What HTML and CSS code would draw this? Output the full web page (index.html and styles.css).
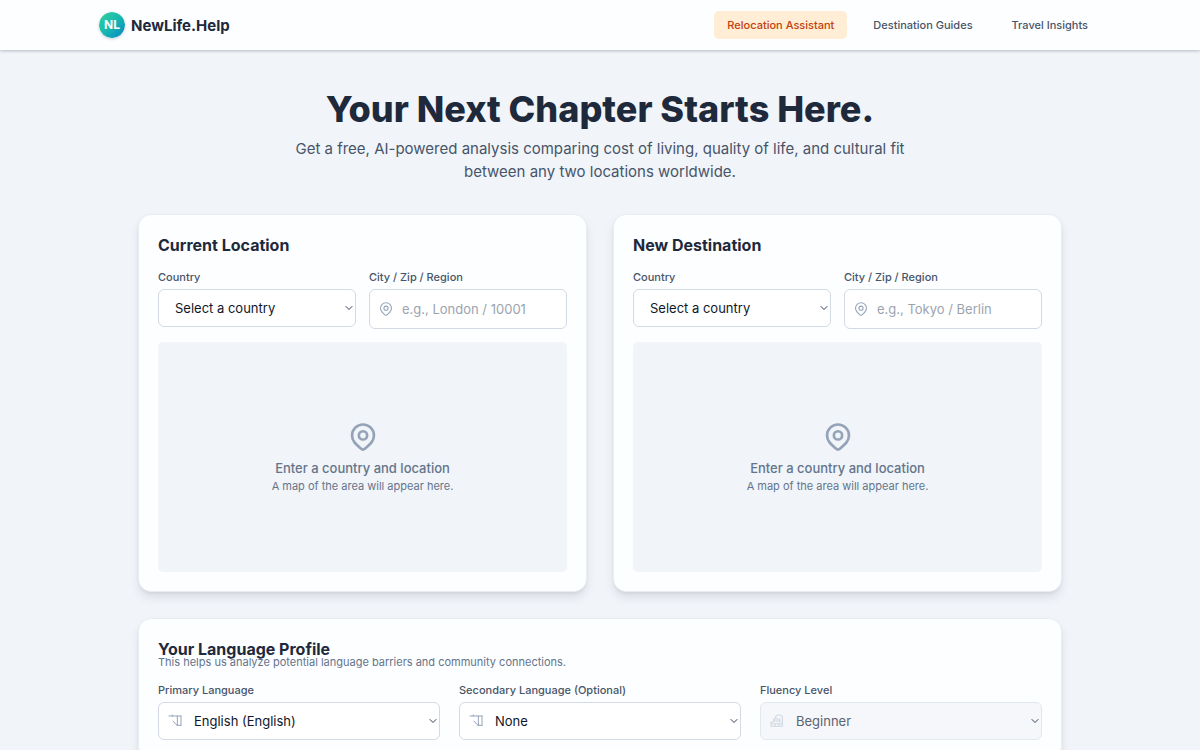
FILE: index.html
```html
<!DOCTYPE html>
<html lang="en">
<head>
  <meta charset="UTF-8">
  <meta name="viewport" content="width=device-width, initial-scale=1.0">
  <title>NewLife.Help</title>
  <link rel="stylesheet" href="styles.css">
</head>
<body>
  <svg class="sprite" aria-hidden="true">
    <symbol id="pin" viewBox="0 0 24 24">
      <circle cx="12" cy="10.8" r="3.1"/>
      <path d="M20.2 10.8c0 4.6-3.4 7-6.6 9.9-1 .9-2.2.9-3.2 0-3.2-2.9-6.6-5.3-6.6-9.9a8.2 8.2 0 1 1 16.4 0Z"/>
    </symbol>
    <symbol id="lang" viewBox="0 0 24 24">
      <path d="M3 4.5h18M8 3v1.5M15.5 4.5v14M21 4.5v14M15.5 18.5H21M9 12c2 0 3 6 6.5 6.5"/>
    </symbol>
    <symbol id="level" viewBox="0 0 24 24">
      <path d="M3 20v-6l4-1V9h3V6c0-2 2-3 5-3s5 1 5 3v14H3ZM3 16h17M11 9h5v4M8 12h9M9 20v-4M15 20v-4"/>
    </symbol>
    <symbol id="chevron" viewBox="0 0 8 8">
      <path d="M1 2.5l3 3 3-3"/>
    </symbol>
  </svg>

  <header class="header">
    <div class="header-inner">
      <a href="#" class="brand">
        <svg class="logo" viewBox="0 0 26 26" aria-hidden="true">
          <defs>
            <linearGradient id="logoFill" x1="0" y1="0" x2="1" y2="1">
              <stop offset="0" stop-color="#34d399"/>
              <stop offset="0.5" stop-color="#16b8b0"/>
              <stop offset="1" stop-color="#0284c7"/>
            </linearGradient>
          </defs>
          <circle cx="13" cy="13" r="13" fill="url(#logoFill)"/>
          <text x="13" y="17" text-anchor="middle" class="logo-text">NL</text>
        </svg>
        <span>NewLife.Help</span>
      </a>
      <nav class="nav">
        <a href="#" class="nav-link active">Relocation Assistant</a>
        <a href="#" class="nav-link">Destination Guides</a>
        <a href="#" class="nav-link">Travel Insights</a>
      </nav>
    </div>
  </header>

  <main class="main">
    <section class="hero">
      <h1>Your Next Chapter Starts Here.</h1>
      <p>Get a free, AI-powered analysis comparing cost of living, quality of life, and cultural fit between any two locations worldwide.</p>
    </section>

    <form class="form">
      <div class="locations">
        <section class="card">
          <h2>Current Location</h2>
          <div class="fields two">
            <div class="field">
              <label for="currentCountry">Country</label>
              <div class="control-wrap">
                <select id="currentCountry" class="control plain">
                  <option>Select a country</option>
                </select>
                <svg class="chevron"><use href="#chevron"/></svg>
              </div>
            </div>
            <div class="field">
              <label for="currentCity">City / Zip / Region</label>
              <div class="control-wrap">
                <svg class="icon"><use href="#pin"/></svg>
                <input type="text" id="currentCity" class="control" placeholder="e.g., London / 10001">
              </div>
            </div>
          </div>
          <div class="map">
            <svg class="map-icon"><use href="#pin"/></svg>
            <p class="map-title">Enter a country and location</p>
            <p class="map-note">A map of the area will appear here.</p>
          </div>
        </section>

        <section class="card">
          <h2>New Destination</h2>
          <div class="fields two">
            <div class="field">
              <label for="newCountry">Country</label>
              <div class="control-wrap">
                <select id="newCountry" class="control plain">
                  <option>Select a country</option>
                </select>
                <svg class="chevron"><use href="#chevron"/></svg>
              </div>
            </div>
            <div class="field">
              <label for="newCity">City / Zip / Region</label>
              <div class="control-wrap">
                <svg class="icon"><use href="#pin"/></svg>
                <input type="text" id="newCity" class="control" placeholder="e.g., Tokyo / Berlin">
              </div>
            </div>
          </div>
          <div class="map">
            <svg class="map-icon"><use href="#pin"/></svg>
            <p class="map-title">Enter a country and location</p>
            <p class="map-note">A map of the area will appear here.</p>
          </div>
        </section>
      </div>

      <section class="card profile">
        <h2>Your Language Profile</h2>
        <p class="profile-note">This helps us analyze potential language barriers and community connections.</p>
        <div class="fields three">
          <div class="field">
            <label for="primaryLanguage">Primary Language</label>
            <div class="control-wrap">
              <svg class="icon thin"><use href="#lang"/></svg>
              <select id="primaryLanguage" class="control">
                <option>English (English)</option>
              </select>
              <svg class="chevron"><use href="#chevron"/></svg>
            </div>
          </div>
          <div class="field">
            <label for="secondaryLanguage">Secondary Language (Optional)</label>
            <div class="control-wrap">
              <svg class="icon thin"><use href="#lang"/></svg>
              <select id="secondaryLanguage" class="control">
                <option>None</option>
              </select>
              <svg class="chevron"><use href="#chevron"/></svg>
            </div>
          </div>
          <div class="field">
            <label for="fluency">Fluency Level</label>
            <div class="control-wrap">
              <svg class="icon faded"><use href="#level"/></svg>
              <select id="fluency" class="control" disabled>
                <option>Beginner</option>
              </select>
              <svg class="chevron"><use href="#chevron"/></svg>
            </div>
          </div>
        </div>
      </section>
    </form>
  </main>
</body>
</html>
```
FILE: styles.css
```css
* {
  box-sizing: border-box;
}

body {
  margin: 0;
  font-family: Inter, "Liberation Sans", sans-serif;
  background-color: #f1f4f9;
  color: #1e293b;
}

h1, h2, p {
  margin: 0;
}

.sprite {
  display: none;
}

svg {
  fill: none;
  stroke: currentColor;
  stroke-linecap: round;
  stroke-linejoin: round;
}

/* Header */
.header {
  background-color: #fdfeff;
  box-shadow: 0 1px 3px rgba(15, 23, 42, 0.25);
}

.header-inner {
  display: flex;
  justify-content: space-between;
  align-items: center;
  max-width: 1026px;
  height: 50px;
  margin: 0 auto;
  padding: 0 12px;
}

.brand {
  display: flex;
  align-items: center;
  gap: 6px;
  color: #1e293b;
  font-size: 15px;
  font-weight: 700;
  text-decoration: none;
}

.logo {
  width: 26px;
  height: 26px;
  stroke: none;
  border-radius: 50%;
  box-shadow: 0 1px 3px rgba(15, 23, 42, 0.2);
}

.logo-text {
  fill: white;
  font-size: 12px;
  font-weight: 700;
}

.nav {
  display: flex;
  gap: 13px;
}

.nav-link {
  padding: 6px 13px;
  border-radius: 5px;
  color: #475569;
  font-size: 11px;
  font-weight: 500;
  line-height: 16px;
  text-decoration: none;
}

.nav-link.active {
  background-color: #ffedd5;
  color: #c2410c;
}

/* Hero */
.main {
  max-width: 950px;
  margin: 0 auto;
  padding: 39px 13px;
}

.hero {
  max-width: 620px;
  margin: 0 auto 31px;
  text-align: center;
}

h1 {
  font-size: 36px;
  font-weight: 800;
  line-height: 40px;
}

.hero p {
  margin-top: 8px;
  color: #475569;
  font-size: 15px;
  line-height: 23px;
}

/* Cards */
.form {
  display: grid;
  gap: 26px;
}

.locations {
  display: grid;
  grid-template-columns: 1fr 1fr;
  gap: 26px;
}

.card {
  padding: 19px;
  background-color: #fdfeff;
  border: 1px solid #e9edf3;
  border-radius: 13px;
  box-shadow: 0 6px 12px -2px rgba(15, 23, 42, 0.12), 0 2px 4px -2px rgba(15, 23, 42, 0.12);
}

h2 {
  font-size: 16px;
  font-weight: 700;
  line-height: 22px;
}

.fields {
  display: grid;
  align-items: start;
}

.two {
  grid-template-columns: 1fr 1fr;
  gap: 13px;
  margin-top: 13px;
}

.three {
  grid-template-columns: 1fr 1fr 1fr;
  gap: 19px;
  margin-top: 12px;
}

label {
  display: block;
  margin-bottom: 4px;
  color: #475569;
  font-size: 11px;
  font-weight: 500;
  line-height: 16px;
}

.control-wrap {
  position: relative;
}

.control {
  appearance: none;
  display: block;
  width: 100%;
  height: 38px;
  padding: 0 16px 0 32px;
  background-color: white;
  border: 1px solid #d3dae4;
  border-radius: 6px;
  color: #0f172a;
  font-family: inherit;
  font-size: 13px;
}

select.control {
  padding-left: 35px;
}

select.control.plain {
  padding-left: 16px;
}

input.control {
  height: 40px;
}

.control::placeholder {
  color: #9ca3af;
}

.control:disabled {
  background-color: #f5f7fb;
  border-color: #e2e8f0;
  color: #5b6472;
  opacity: 1;
}

.icon,
.chevron {
  position: absolute;
  top: 0;
  bottom: 0;
  margin: auto 0;
  pointer-events: none;
}

.icon {
  left: 9px;
  width: 16px;
  height: 16px;
  color: #94a3b8;
  stroke-width: 1.6;
}

.icon.thin {
  stroke-width: 1.5;
}

.icon.faded {
  color: #d0d7e1;
}

.chevron {
  right: 3px;
  width: 8px;
  height: 8px;
  color: #334155;
}

/* Map placeholder */
.map {
  display: flex;
  flex-direction: column;
  justify-content: center;
  align-items: center;
  height: 230px;
  margin-top: 13px;
  background-color: #f1f4f9;
  border-radius: 5px;
  color: #64748b;
}

.map-icon {
  width: 32px;
  height: 32px;
  margin-bottom: 6px;
  color: #94a3b8;
  stroke-width: 2;
}

.map-title {
  font-size: 13px;
  font-weight: 500;
  line-height: 19px;
}

.map-note {
  font-size: 11px;
  line-height: 16px;
}

/* The note tucks up under the heading */
.profile-note {
  margin-top: -6px;
  color: #64748b;
  font-size: 11px;
  line-height: 16px;
}
```
